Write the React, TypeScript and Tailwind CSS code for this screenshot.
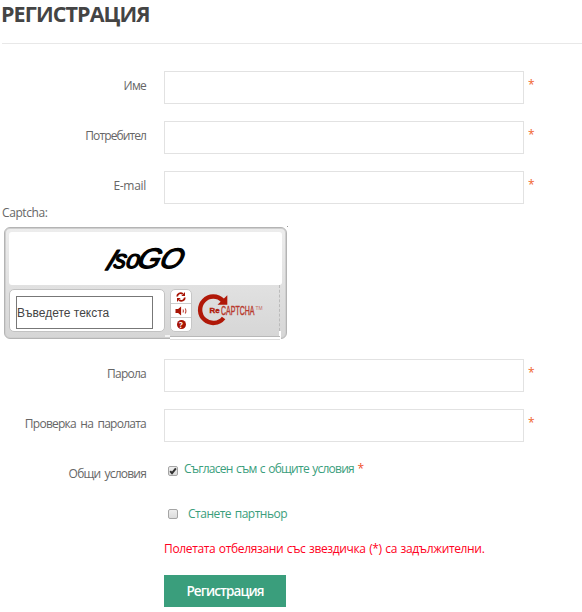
import React, { useState } from 'react';

interface FieldProps {
  label: string;
  name: string;
  type?: string;
  labelClass?: string;
}

const Field: React.FC<FieldProps> = ({ label, name, type = 'text', labelClass = 'tracking-[-0.75px] [word-spacing:2px]' }) => (
  <div className="flex h-[33px] mb-[17px]">
    <label htmlFor={name} className={`w-[146px] mr-[18px] pt-[6px] text-right whitespace-nowrap ${labelClass}`}>{label}</label>
    <input id={name} name={name} type={type} className="w-[360px] h-[33px] px-2 border border-[#e2e2e2] bg-white outline-none" />
    <span className="ml-[4px] pt-[5px] text-[#f0642d]">*</span>
  </div>
);

interface CheckProps {
  checked: boolean;
  onChange: (value: boolean) => void;
}

const Check: React.FC<CheckProps> = ({ checked, onChange }) => (
  <button
    type="button"
    role="checkbox"
    aria-checked={checked}
    onClick={() => onChange(!checked)}
    className="w-[10px] h-[10px] shrink-0 rounded-[2px] border border-[#a5a5a5] bg-linear-to-b from-[#eeeeee] to-[#dcdcdc]"
  >
    {checked && (
      <svg viewBox="0 0 8 8" className="w-[8px] h-[8px]">
        <path d="M1.2 4.2 3 6.2 6.9 1.3" fill="none" stroke="#333" strokeWidth="2" />
      </svg>
    )}
  </button>
);

const RefreshIcon = () => (
  <svg width="12" height="12" viewBox="0 0 12 12" fill="#a81405">
    <path d="M2.2 5.6A3.4 3.4 0 0 1 7.8 3" fill="none" stroke="#a81405" strokeWidth="1.8" />
    <path d="M6.4 4.9 10 5V1.1Z" />
    <path d="M9.8 6.4A3.4 3.4 0 0 1 4.2 9" fill="none" stroke="#a81405" strokeWidth="1.8" />
    <path d="M5.6 7.1 2 7v3.9Z" />
  </svg>
);

const AudioIcon = () => (
  <svg width="12" height="12" viewBox="0 0 12 12" fill="#a81405">
    <path d="M.5 4h2.6l3-2.4v8.8L3.1 8H.5Z" />
    <path d="M7.9 4.5q1 1.5 0 3M10.200 3.500q1.400 2.500 0 5" fill="none" stroke="#c0473b" strokeWidth="1.1" />
  </svg>
);

const HelpIcon = () => (
  <span className="w-[9px] h-[9px] rounded-full bg-[#a81405] text-white text-[8px] leading-[9px] font-bold text-center">?</span>
);

const RecaptchaLogo = () => (
  <svg width="70" height="36" viewBox="0 0 70 36">
    <path d="M26.8 8.6A13.2 13.2 0 1 0 27.6 26" fill="none" stroke="#b01808" strokeWidth="4.4" />
    <path d="M21.5 12.8h9.8V3.200Z" fill="#b01808" />
    <text x="13.500" y="21.300" textLength="10" lengthAdjust="spacingAndGlyphs" fontFamily="Liberation Sans, sans-serif" fontWeight="700" fontSize="7.500" fill="#b01808" stroke="#b01808" strokeWidth=".4">Re</text>
    <text x="25" y="22.800" textLength="33.500" lengthAdjust="spacingAndGlyphs" fontFamily="Liberation Sans, sans-serif" fontSize="12" fill="#b8392d" stroke="#b8392d" strokeWidth=".4">CAPTCHA</text>
    <text x="59.500" y="17.500" textLength="7" lengthAdjust="spacingAndGlyphs" fontFamily="Liberation Sans, sans-serif" fontSize="4.500" fill="#c4685f">TM</text>
  </svg>
);

const Captcha = () => (
  <div className="relative w-[283px] h-[112px] ml-[4px] p-[4px] rounded-[6px] border border-[#b4b4b4] shadow-[inset_0_0_0_1px_#cfcfcf] bg-linear-to-b from-[#ededed] to-[#d6d6d6]">
    <div className="h-[53px] flex items-center justify-center rounded-[3px] bg-white">
      <svg width="88" height="40" viewBox="-2 -3 88 40" className="mr-[1px]">
        <g fontFamily="Liberation Sans, sans-serif" fontStyle="italic" fill="#000" stroke="#000" strokeWidth="1.3" strokeLinejoin="round">
          <text transform="translate(1 27.500) skewX(-22)" fontSize="29">I</text>
          <text transform="translate(10 26) skewX(-10)" fontSize="26" textLength="26" lengthAdjust="spacingAndGlyphs">so</text>
          <text transform="translate(33 25.500) skewX(-17)" fontSize="28" textLength="45" lengthAdjust="spacingAndGlyphs">GO</text>
        </g>
      </svg>
    </div>
    <div className="flex mt-[4px]">
      <div className="w-[156px] h-[43px] p-[6px] rounded-[5px] border border-[#c2c2c2] bg-white">
        <input
          placeholder="Въведете текста"
          className="block w-[137px] h-[33px] border border-[#777777] bg-white font-['Liberation_Sans',sans-serif] text-[12px] outline-none placeholder:text-[#444444]"
        />
      </div>
      <div className="w-[22px] h-[43px] ml-[5px] rounded-[5px] border border-[#c6c6c6] bg-white flex flex-col divide-y divide-[#cccccc]">
        <button type="button" className="flex-1 flex items-center justify-center" aria-label="refresh"><RefreshIcon /></button>
        <button type="button" className="flex-1 flex items-center justify-center" aria-label="audio"><AudioIcon /></button>
        <button type="button" className="flex-1 flex items-center justify-center" aria-label="help"><HelpIcon /></button>
      </div>
      <div className="ml-[4px] mt-[3px]"><RecaptchaLogo /></div>
    </div>
    {/* uneven frame seams around the lower right corner */}
    <span className="absolute left-[274px] top-[57px] h-[46px] border-l border-dashed border-[#bbbbbb]" />
    <span className="absolute left-[274px] top-[103px] w-[2px] h-[8px] bg-white" />
    <span className="absolute left-[160px] top-[107px] w-[5px] h-[2px] bg-white/70" />
    <span className="absolute left-[165px] top-[108px] w-[110px] h-[4px] border-t border-[#b8b8b8] border-b border-b-[#dddddd] bg-white" />
    <span className="absolute left-[282px] -top-[2px] w-px h-px bg-[#999999]" />
  </div>
);

const App: React.FC = () => {
  const [agree, setAgree] = useState(true);
  const [partner, setPartner] = useState(false);

  return (
    <div className="w-[582px] h-[612px] overflow-hidden bg-white font-['Open_Sans','Noto_Sans',sans-serif] text-[12px] leading-[18px] text-[#666666]">
      <h1 className="ml-[1px] h-[43px] text-[21.5px] leading-[27px] tracking-[-0.9px] font-bold text-[#444444] whitespace-nowrap">РЕГИСТРАЦИЯ</h1>
      <hr className="ml-[2px] mb-[27px] border-0 h-px bg-[#e8e8e8]" />

      <form onSubmit={(e) => e.preventDefault()}>
        <Field label="Име" name="name" />
        <Field label="Потребител" name="username" labelClass="tracking-[-0.9px]" />
        <Field label="E-mail" name="email" labelClass="tracking-[-0.3px]" />

        <div className="-mt-[17px] h-[23px] pl-[2px] tracking-[-0.4px]">Captcha:</div>
        <Captcha />

        <div className="mt-[20px]">
          <Field label="Парола" name="password" type="password" />
          <Field label="Проверка на паролата" name="password2" type="password" />
        </div>

        <div className="flex h-[50px]">
          <span className="w-[146px] pt-[6px] text-right tracking-[-0.8px] [word-spacing:2px]">Общи условия</span>
          <div className="flex items-start ml-[22px] text-[#3a9e7c]">
            <div className="pt-[7px] flex"><Check checked={agree} onChange={setAgree} /></div>
            <span className="ml-[6px] pt-px tracking-[-0.75px] [word-spacing:1px]">Съгласен съм с общите условия <span className="text-[#f0502d]">*</span></span>
          </div>
        </div>
        <div className="flex items-start h-[30px] pl-[168px] -mt-[4px] text-[#3a9e7c]">
          <div className="pt-[4px] flex"><Check checked={partner} onChange={setPartner} /></div>
          <span className="ml-[10px] tracking-[-0.5px] [word-spacing:1px]">Станете партньор</span>
        </div>

        <p className="ml-[164px] mt-[5px] h-[35px] tracking-[-0.35px] [word-spacing:0.7px] text-[#ff0022] whitespace-nowrap">Полетата отбелязани със звездичка (*) са задължителни.</p>
        <button type="submit" className="ml-[164px] block w-[122px] h-[32px] bg-[#3a9e7c] text-white text-[13.5px] leading-[32px] tracking-[-0.9px] font-semibold">Регистрация</button>
      </form>
    </div>
  );
};

export default App;
